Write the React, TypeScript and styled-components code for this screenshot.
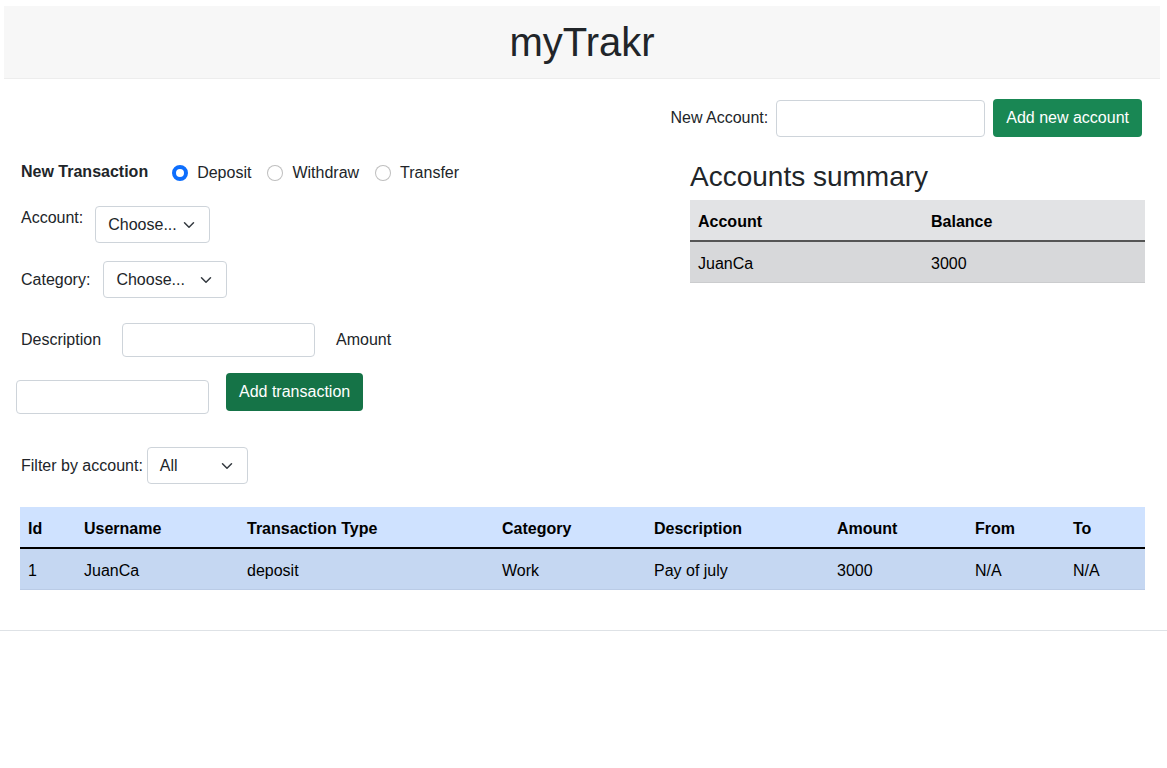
import styled, { createGlobalStyle } from "styled-components";

const GlobalStyle = createGlobalStyle`
  * { box-sizing: border-box; }
  body {
    margin: 0;
    font-family: "Liberation Sans", Arial, sans-serif;
    font-size: 16px;
    line-height: 1.5;
    color: #212529;
    background: #fff;
  }
`;

const tones = {
  primary: { head: "#cfe2ff", row: "#c5d7f2", line: "#bacbe6", rule: "#000" },
  secondary: { head: "#e2e3e5", row: "#d7d8da", line: "#cbccce", rule: "#555" },
};
type Tone = keyof typeof tones;

const Page = styled.div`
  padding-top: 6px;
`;
const Header = styled.header`
  margin: 0 7px 0 4px;
  height: 73px;
  background: #f7f7f7;
  border-bottom: 1px solid #ededed;
  display: flex;
  align-items: center;
  justify-content: center;
`;
const Title = styled.h1`
  margin: 0;
  font-size: 40px;
  font-weight: 500;
  line-height: 1.2;
`;
const Main = styled.main`
  padding: 20px 22px 0 16px;
`;
const AccountBar = styled.div`
  display: flex;
  justify-content: flex-end;
  align-items: center;
  gap: 8px;
  padding-right: 3px;
`;
const Label = styled.label<{ $gap?: number }>`
  margin-left: 5px;
  margin-right: ${(p) => p.$gap ?? 0}px;
  white-space: nowrap;
`;
const TextInput = styled.input<{ $w: number; $h: number }>`
  width: ${(p) => p.$w}px;
  height: ${(p) => p.$h}px;
  border: 1px solid #ced4da;
  border-radius: 4px;
  padding: 6px 12px;
  font: inherit;
  background: #fff;
`;
const Button = styled.button<{ $dark?: boolean }>`
  height: 38px;
  padding: 0 13px;
  border: 0;
  border-radius: 4px;
  background: ${(p) => (p.$dark ? "#157347" : "#198754")};
  color: #fff;
  font: inherit;
  cursor: pointer;
`;
const Columns = styled.div`
  display: flex;
  margin-top: 23px;
`;
const LeftCol = styled.section`
  width: 560px;
`;
const RightCol = styled.section`
  width: 455px;
  margin-left: auto;
`;
const TypeRow = styled.div`
  display: flex;
  align-items: center;
  height: 24px;
`;
const FormTitle = styled.span`
  margin-left: 5px;
  margin-right: 24px;
  font-weight: 700;
`;
const RadioOption = styled.label`
  display: flex;
  align-items: center;
  gap: 9px;
  margin-right: 16px;
  margin-top: 2px;
`;
const Radio = styled.input.attrs({ type: "radio" })`
  appearance: none;
  margin: 0;
  width: 16px;
  height: 16px;
  border-radius: 50%;
  border: 1px solid rgba(0, 0, 0, 0.25);
  background: #fff;
  &:checked {
    border: 4.5px solid #0d6efd;
  }
`;
const FieldRow = styled.div<{ $top: number; $align?: string }>`
  display: flex;
  align-items: ${(p) => p.$align ?? "center"};
  margin-top: ${(p) => p.$top}px;
`;
const SelectBox = styled.div<{ $w: number }>`
  width: ${(p) => p.$w}px;
  height: 37px;
  display: flex;
  align-items: center;
  justify-content: space-between;
  padding: 0 13px 0 12px;
  border: 1px solid #ced4da;
  border-radius: 4px;
  background: #fff;
  color: #212529;
`;
const Chevron = styled.svg`
  width: 14px;
  height: 12px;
  flex: none;
`;
const Table = styled.table<{ $tone: Tone }>`
  border-collapse: collapse;
  width: 100%;
  color: #000;
  th,
  td {
    padding: 10px 8px 6px;
    text-align: left;
    vertical-align: top;
    line-height: 24px;
    border-bottom: 1px solid ${(p) => tones[p.$tone].line};
  }
  th {
    font-weight: 700;
  }
  thead tr {
    background: ${(p) => tones[p.$tone].head};
  }
  tbody {
    border-top: 2px solid ${(p) => tones[p.$tone].rule};
  }
  tbody tr {
    background: ${(p) => tones[p.$tone].row};
  }
`;
const SummaryTitle = styled.h3`
  margin: 0 0 6px;
  font-size: 28px;
  font-weight: 500;
  line-height: 1.2;
`;
const TxTableWrap = styled.div`
  margin: 23px 0 0 4px;
`;
const Footer = styled.footer`
  margin-top: 40px;
  border-top: 1px solid #dee2e6;
  height: 40px;
`;

function Select({ value, width }: { value: string; width: number }) {
  return (
    <SelectBox $w={width}>
      <span>{value}</span>
      <Chevron viewBox="0 0 16 16">
        <path d="m2 5 6 6 6-6" fill="none" stroke="#343a40" strokeWidth="2" strokeLinecap="round" strokeLinejoin="round" />
      </Chevron>
    </SelectBox>
  );
}

const txCols = [
  ["Id", 56],
  ["Username", 163],
  ["Transaction Type", 255],
  ["Category", 152],
  ["Description", 183],
  ["Amount", 138],
  ["From", 98],
  ["To", 80],
] as const;

const transactions = [
  ["1", "JuanCa", "deposit", "Work", "Pay of july", "3000", "N/A", "N/A"],
];

export default function App() {
  return (
    <Page>
      <GlobalStyle />
      <Header>
        <Title>myTrakr</Title>
      </Header>
      <Main>
        <AccountBar>
          <Label>New Account:</Label>
          <TextInput $w={209} $h={37} />
          <Button>Add new account</Button>
        </AccountBar>
        <Columns>
          <LeftCol>
            <TypeRow>
              <FormTitle>New Transaction</FormTitle>
              <RadioOption>
                <Radio name="type" defaultChecked />
                Deposit
              </RadioOption>
              <RadioOption>
                <Radio name="type" />
                Withdraw
              </RadioOption>
              <RadioOption>
                <Radio name="type" />
                Transfer
              </RadioOption>
            </TypeRow>
            <FieldRow $top={22} $align="flex-start">
              <Label $gap={12}>Account:</Label>
              <Select value="Choose..." width={115} />
            </FieldRow>
            <FieldRow $top={18}>
              <Label $gap={13}>Category:</Label>
              <Select value="Choose..." width={124} />
            </FieldRow>
            <FieldRow $top={25}>
              <Label $gap={21}>Description</Label>
              <TextInput $w={193} $h={34} />
              <Label $gap={0} style={{ marginLeft: 21 }}>Amount</Label>
            </FieldRow>
            <FieldRow $top={16} $align="flex-start">
              <TextInput $w={193} $h={34} style={{ marginTop: 7, marginRight: 17 }} />
              <Button $dark>Add transaction</Button>
            </FieldRow>
            <FieldRow $top={33}>
              <Label $gap={4}>Filter by account:</Label>
              <Select value="All" width={101} />
            </FieldRow>
          </LeftCol>
          <RightCol>
            <SummaryTitle>Accounts summary</SummaryTitle>
            <Table $tone="secondary">
              <colgroup>
                <col style={{ width: 233 }} />
                <col style={{ width: 222 }} />
              </colgroup>
              <thead>
                <tr>
                  <th>Account</th>
                  <th>Balance</th>
                </tr>
              </thead>
              <tbody>
                <tr>
                  <td>JuanCa</td>
                  <td>3000</td>
                </tr>
              </tbody>
            </Table>
          </RightCol>
        </Columns>
        <TxTableWrap>
          <Table $tone="primary">
            <colgroup>
              {txCols.map(([name, w]) => (
                <col key={name} style={{ width: w }} />
              ))}
            </colgroup>
            <thead>
              <tr>
                {txCols.map(([name]) => (
                  <th key={name}>{name}</th>
                ))}
              </tr>
            </thead>
            <tbody>
              {transactions.map((row) => (
                <tr key={row[0]}>
                  {row.map((cell, i) => (
                    <td key={i}>{cell}</td>
                  ))}
                </tr>
              ))}
            </tbody>
          </Table>
        </TxTableWrap>
      </Main>
      <Footer />
    </Page>
  );
}
